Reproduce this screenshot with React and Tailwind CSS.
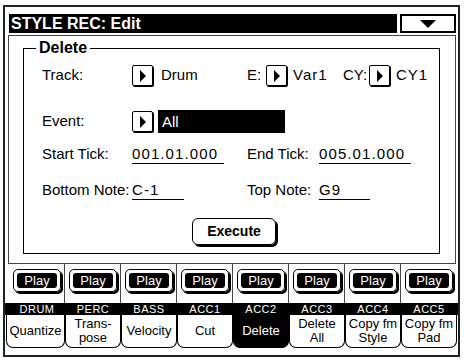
const tracks = ["DRUM", "PERC", "BASS", "ACC1", "ACC2", "ACC3", "ACC4", "ACC5"];
const tabs = [
  ["Quantize"],
  ["Trans-", "pose"],
  ["Velocity"],
  ["Cut"],
  ["Delete"],
  ["Delete", "All"],
  ["Copy fm", "Style"],
  ["Copy fm", "Pad"],
];

function ArrowBox() {
  return (
    <div className="w-[21px] h-[21px] border border-black shadow-[1px_1px_0_#000] rounded-[2px] flex items-center justify-center bg-white">
      <svg width="8" height="12" viewBox="0 0 8 12">
        <path d="M1 0 L7 6 L1 12 Z" fill="#000" />
      </svg>
    </div>
  );
}

function Field({ value, width }) {
  return (
    <div className={`${width} h-[19px] border-b-[1.5px] border-black leading-[17px] tracking-[1.1px]`}>
      {value}
    </div>
  );
}

export default function App() {
  return (
    <div
      className="w-[464px] h-[360px] bg-white overflow-hidden pt-[5px] pl-[3px] text-black"
      style={{ fontFamily: '"Liberation Sans", Arial, sans-serif' }}
    >
      <div className="w-[457px] h-[352px] border-2 border-[#222] flex flex-col">
        {/* Title */}
        <div className="flex pt-[7px] pl-[4px] gap-[3px]">
          <div className="w-[388px] h-[19px] bg-black text-white font-bold text-[16px] leading-[19px] pl-[2px]">
            STYLE REC: Edit
          </div>
          <div className="w-[56px] h-[19px] border-2 border-black flex items-center justify-center">
            <svg width="16" height="8" viewBox="0 0 16 8">
              <path d="M0 0 H16 L8 8 Z" fill="#000" />
            </svg>
          </div>
        </div>

        {/* Content panel */}
        <div className="ml-[3px] mt-[2px] w-[448px] h-[229px] border border-[#444] pl-[14px] pt-[12px]">
          <div className="relative w-[417px] h-[206px] border-[1.5px] border-black pl-[18px] pt-[16px] text-[15px]">
            <div className="absolute -top-[10px] left-[12px] bg-white px-[3px] font-bold text-[16px] leading-[18px]">
              Delete
            </div>

            {/* Track row */}
            <div className="flex items-center h-[21px]">
              <div className="w-[90px]">Track:</div>
              <ArrowBox />
              <div className="w-[94px] pl-[8px]">Drum</div>
              <div className="w-[19px]">E:</div>
              <ArrowBox />
              <div className="w-[56px] pl-[6px] tracking-[1px]">Var1</div>
              <div className="w-[26px]">CY:</div>
              <ArrowBox />
              <div className="pl-[6px] tracking-[1px]">CY1</div>
            </div>

            {/* Event row */}
            <div className="flex items-center h-[23px] mt-[24px]">
              <div className="w-[90px]">Event:</div>
              <ArrowBox />
              <div className="ml-[5px] w-[127px] h-[23px] bg-black text-white pl-[4px] leading-[23px]">All</div>
            </div>

            {/* Tick row */}
            <div className="flex items-end h-[19px] mt-[12px]">
              <div className="w-[90px] leading-[17px] self-start">Start Tick:</div>
              <div className="w-[115px]">
                <Field value="001.01.000" width="w-[92px]" />
              </div>
              <div className="w-[72px] leading-[17px] self-start">End Tick:</div>
              <Field value="005.01.000" width="w-[92px]" />
            </div>

            {/* Note row */}
            <div className="flex items-end h-[19px] mt-[17px]">
              <div className="w-[90px] leading-[17px] self-start">Bottom Note:</div>
              <div className="w-[115px]">
                <Field value="C-1" width="w-[52px]" />
              </div>
              <div className="w-[72px] leading-[17px] self-start">Top Note:</div>
              <Field value="G9" width="w-[51px]" />
            </div>

            {/* Execute */}
            <div className="mt-[18px] ml-[150px] w-[84px] h-[27px] border border-black rounded-[6px] shadow-[2px_2px_0_#000] flex items-center justify-center font-bold text-[14px]">
              Execute
            </div>
          </div>
        </div>

        {/* Bottom section */}
        <div className="flex pl-[4px] h-[39px]">
          {tracks.map((t, i) => (
            <div
              key={t}
              className={`w-[56px] h-full pt-[5px] pl-[4px] ${i < 7 ? "border-r border-[#444]" : ""}`}
            >
              <div className="w-[48px] h-[23px] border border-black rounded-[5px] shadow-[2px_2px_0_#000] p-[3px]">
                <div className="w-full h-full bg-black rounded-[3px] text-white text-[13px] leading-[15px] text-center">
                  Play
                </div>
              </div>
            </div>
          ))}
        </div>
        <div className="flex pl-[4px] h-[12px] bg-black text-white text-[11px] leading-[12px]">
          {tracks.map((t) => (
            <div key={t} className="w-[56px] text-center tracking-[0.5px]">
              {t}
            </div>
          ))}
        </div>
        <div className="flex pl-[1px] h-[33px]">
          {tabs.map((lines, i) => (
            <div
              key={i}
              className={`${i === 0 ? "w-[59px]" : "w-[56px]"} h-full border-x border-b border-black rounded-b-[7px] flex flex-col items-center justify-center text-[13px] leading-[14px] ${
                i === 4 ? "bg-black text-white" : "bg-white"
              }`}
            >
              {lines.map((l) => (
                <div key={l}>{l}</div>
              ))}
            </div>
          ))}
        </div>
      </div>
    </div>
  );
}
